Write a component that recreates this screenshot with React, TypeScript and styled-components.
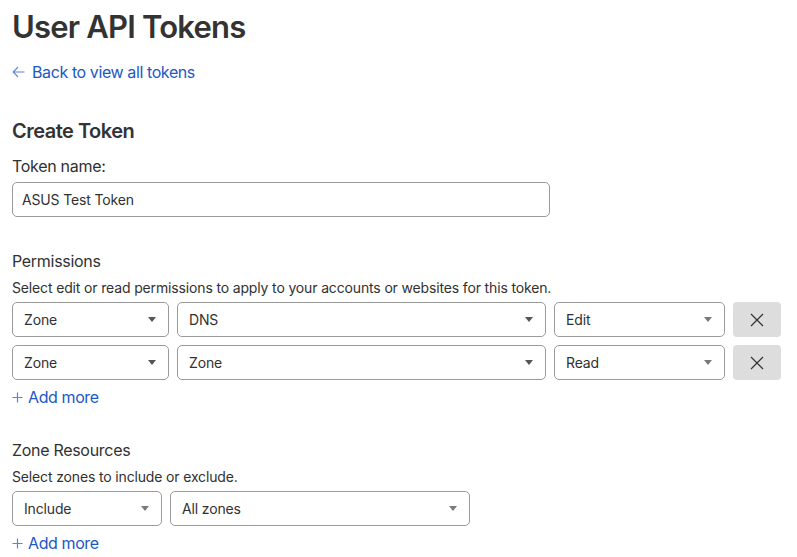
import { createGlobalStyle } from "styled-components";
import styled from "styled-components";

const colors = {
  text: "#313131",
  heading: "#333333",
  link: "#2157c6",
  linkIcon: "#5a86d6",
  border: "#9a9a9a",
  buttonBg: "#dddddd",
};

const GlobalStyle = createGlobalStyle`
  html, body {
    margin: 0;
    padding: 0;
    background: #ffffff;
  }
  body {
    font-family: Inter, "Noto Sans", "Liberation Sans", sans-serif;
    color: ${colors.text};
    -webkit-font-smoothing: antialiased;
  }
`;

const Page = styled.main`
  display: flex;
  flex-direction: column;
  align-items: flex-start;
  padding: 8px 12px 0 12px;
`;

const PageTitle = styled.h1`
  margin: 0;
  font-size: 31px;
  line-height: 38px;
  font-weight: 600;
  color: ${colors.heading};
  letter-spacing: -0.8px;
`;

const BackLink = styled.a`
  display: flex;
  align-items: center;
  gap: 7px;
  margin-top: 14px;
  font-size: 16px;
  line-height: 24px;
  letter-spacing: -0.4px;
  color: ${colors.link};
  text-decoration: none;
  cursor: pointer;
`;

const SectionTitle = styled.h2`
  margin: 33px 0 0;
  font-size: 20px;
  line-height: 28px;
  font-weight: 600;
  letter-spacing: -0.5px;
  color: ${colors.heading};
`;

const Label = styled.label<{ $gap: number }>`
  margin-top: ${(p) => p.$gap}px;
  font-size: 16px;
  line-height: 24px;
  letter-spacing: -0.3px;
  color: ${colors.text};
`;

const Hint = styled.p`
  margin: 5px 0 0;
  font-size: 14px;
  line-height: 20px;
  letter-spacing: -0.15px;
  color: ${colors.text};
`;

const TextInput = styled.input`
  box-sizing: border-box;
  margin-top: 4px;
  width: 538px;
  height: 35px;
  padding: 0 9px;
  border: 1px solid ${colors.border};
  border-radius: 5px;
  font-family: inherit;
  font-size: 14px;
  letter-spacing: -0.15px;
  color: ${colors.text};
  background: #fff;
  outline: none;
`;

const Rows = styled.div`
  display: flex;
  flex-direction: column;
  gap: 8px;
  margin-top: 4px;
`;

const Row = styled.div`
  display: flex;
  gap: 8px;
`;

const SelectBox = styled.div<{ $width: number }>`
  box-sizing: border-box;
  width: ${(p) => p.$width}px;
  height: 35px;
  display: flex;
  align-items: center;
  justify-content: space-between;
  padding: 0 12px 0 11px;
  border: 1px solid ${colors.border};
  border-radius: 5px;
  font-size: 14px;
  letter-spacing: -0.15px;
  color: ${colors.text};
  background: #fff;
  cursor: pointer;
`;

const Caret = styled.span<{ $muted?: boolean }>`
  width: 0;
  height: 0;
  border-left: 4.5px solid transparent;
  border-right: 4.5px solid transparent;
  border-top: 5px solid ${(p) => (p.$muted ? "#7a7a7a" : "#555555")};
`;

const RemoveButton = styled.button.attrs({ type: "button" })`
  all: unset;
  box-sizing: border-box;
  width: 48px;
  height: 35px;
  display: flex;
  align-items: center;
  justify-content: center;
  border-radius: 4px;
  background: ${colors.buttonBg};
  cursor: pointer;
`;

const AddMore = styled.button.attrs({ type: "button" })`
  all: unset;
  display: flex;
  align-items: center;
  gap: 5px;
  margin-top: 5px;
  font-size: 16px;
  line-height: 24px;
  letter-spacing: -0.4px;
  color: ${colors.link};
  cursor: pointer;
`;

const ArrowLeft = () => (
  <svg width="13" height="12" viewBox="0 0 13 12" fill="none">
    <path
      d="M12.5 6H1.2M6 1.2 1.2 6 6 10.8"
      stroke={colors.linkIcon}
      strokeWidth="1.2"
    />
  </svg>
);

const PlusIcon = () => (
  <svg width="11" height="11" viewBox="0 0 11 11" fill="none">
    <path d="M5.5 0.5v10M0.5 5.5h10" stroke={colors.linkIcon} strokeWidth="1.2" />
  </svg>
);

const CloseIcon = () => (
  <svg width="14" height="14" viewBox="0 0 14 14" fill="none">
    <path d="M1 1l12 12M13 1 1 13" stroke="#333" strokeWidth="1.2" />
  </svg>
);

interface SelectProps {
  value: string;
  width: number;
  muted?: boolean;
}

function Select({ value, width, muted }: SelectProps) {
  return (
    <SelectBox $width={width}>
      <span>{value}</span>
      <Caret $muted={muted} />
    </SelectBox>
  );
}

const permissions = [
  { scope: "Zone", resource: "DNS", access: "Edit" },
  { scope: "Zone", resource: "Zone", access: "Read" },
];

export default function App() {
  return (
    <>
      <GlobalStyle />
      <Page>
        <PageTitle>User API Tokens</PageTitle>
        <BackLink>
          <ArrowLeft />
          Back to view all tokens
        </BackLink>

        <SectionTitle>Create Token</SectionTitle>
        <Label $gap={9}>Token name:</Label>
        <TextInput defaultValue="ASUS Test Token" />

        <Label $gap={32}>Permissions</Label>
        <Hint>
          Select edit or read permissions to apply to your accounts or websites
          for this token.
        </Hint>
        <Rows>
          {permissions.map((p, i) => (
            <Row key={i}>
              <Select value={p.scope} width={157} />
              <Select value={p.resource} width={369} />
              <Select value={p.access} width={171} muted />
              <RemoveButton>
                <CloseIcon />
              </RemoveButton>
            </Row>
          ))}
        </Rows>
        <AddMore>
          <PlusIcon />
          Add more
        </AddMore>

        <Label $gap={29}>Zone Resources</Label>
        <Hint>Select zones to include or exclude.</Hint>
        <Rows>
          <Row>
            <Select value="Include" width={150} muted />
            <Select value="All zones" width={300} muted />
          </Row>
        </Rows>
        <AddMore>
          <PlusIcon />
          Add more
        </AddMore>
      </Page>
    </>
  );
}
